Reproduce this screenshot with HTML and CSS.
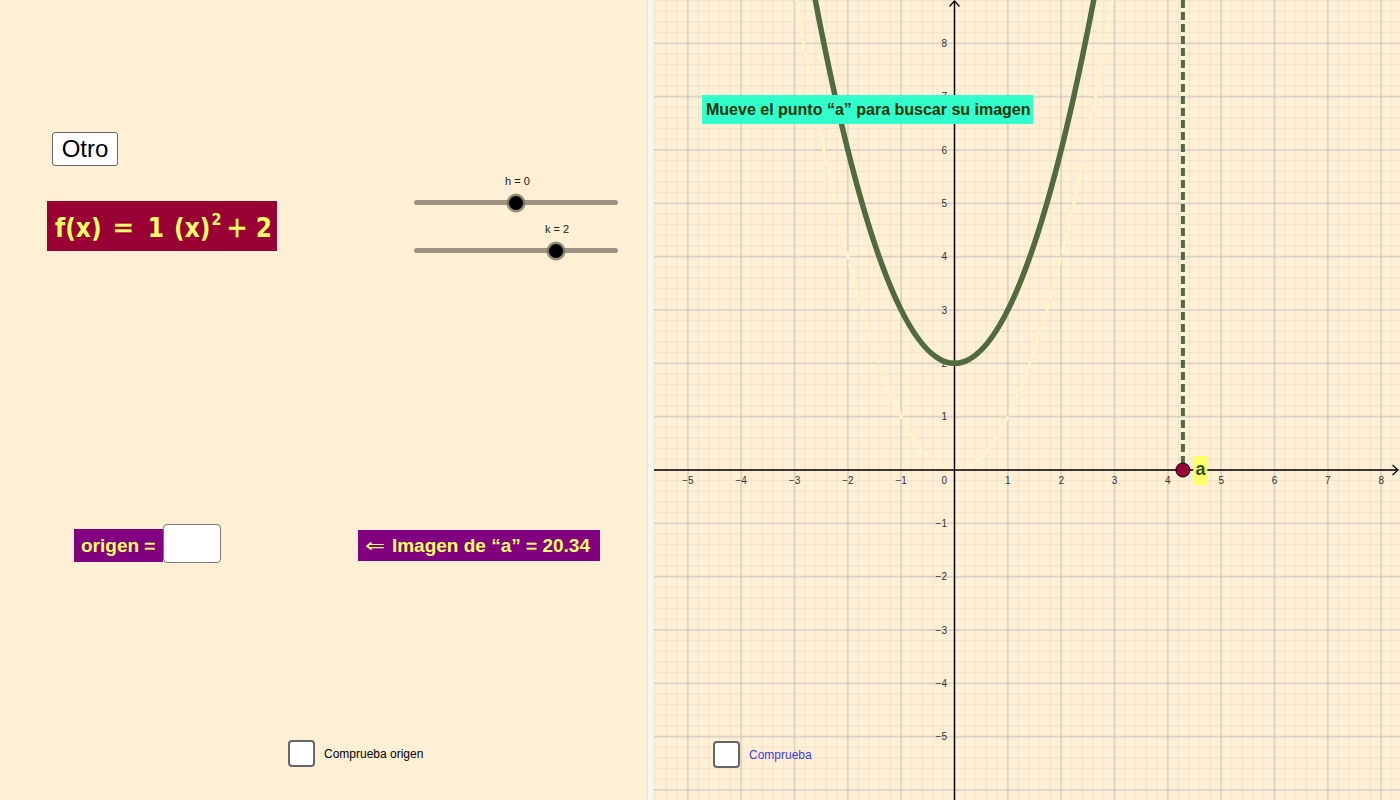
FILE: index.html
```html
<!DOCTYPE html>
<html lang="es">
<head>
<meta charset="utf-8">
<title>Función cuadrática</title>
<link rel="stylesheet" href="styles.css">
</head>
<body>
<div class="applet">
  <div class="view2">
    <button class="btn-otro">Otro</button>

    <div class="formula fbox">
      <span class="m-f">f(x)</span><span class="m-eq">=</span><span class="m-1">1</span><span class="m-par">(x)<sup>2</sup></span><span class="m-plus">+</span><span class="m-2">2</span>
    </div>

    <div class="slider slider-h">
      <span class="slider-label">h = 0</span>
      <div class="track"></div>
      <div class="knob"></div>
    </div>
    <div class="slider slider-k">
      <span class="slider-label">k = 2</span>
      <div class="track"></div>
      <div class="knob"></div>
    </div>

    <div class="origen-row">
      <div class="tex origen">origen <span class="t-eq">=</span></div>
      <div class="input-box"></div>
    </div>

    <div class="tex imagen"><span class="t-arrow">⇐</span>Imagen de “a” <span class="t-eq">=</span> 20.34</div>

    <label class="check check-origen"><span class="box"></span><span class="check-text">Comprueba origen</span></label>
  </div>

  <div class="divider"></div>

  <div class="view1">
    <svg class="graph" width="746" height="800" viewBox="0 0 746 800">
      <defs>
        <pattern id="gmin" patternUnits="userSpaceOnUse" x="295.167" y="464.667" width="10.6667" height="10.6667">
          <path d="M5.3333 0V10.6667M0 5.3333H10.6667" stroke="#f1e4ce" stroke-width="1" fill="none"/>
        </pattern>
        <pattern id="gmaj" patternUnits="userSpaceOnUse" x="273.833" y="443.333" width="53.3333" height="53.3333">
          <path d="M26.6667 0V53.3333M0 26.6667H53.3333" stroke="#c6c2bd" stroke-width="1" fill="none"/>
        </pattern>
      </defs>
      <rect width="746" height="800" fill="#ffefd5"/>
      <rect width="746" height="800" fill="url(#gmin)"/>
      <rect width="746" height="800" fill="url(#gmaj)"/>

      <!-- faint parabola y = x^2 -->
      <path d="M135.17 -42.53 Q300.5 982.53 465.83 -42.53" fill="none" stroke="#fff6c8" stroke-width="3" stroke-dasharray="8 4"/>

      <!-- axes -->
      <line x1="0" y1="470" x2="744" y2="470" stroke="#000" stroke-width="1.4"/>
      <path d="M738.5 465 L744 470 L738.5 475" fill="none" stroke="#000" stroke-width="1.2"/>
      <line x1="300.5" y1="1" x2="300.5" y2="800" stroke="#000" stroke-width="1.4"/>
      <path d="M295.5 6.5 L300.5 1 L305.5 6.5" fill="none" stroke="#000" stroke-width="1.2"/>

      <!-- tick labels -->
      <g class="lbl-x">
        <text x="33.83" y="484">−5</text>
        <text x="87.17" y="484">−4</text>
        <text x="140.5" y="484">−3</text>
        <text x="193.83" y="484">−2</text>
        <text x="247.17" y="484">−1</text>
        <text x="353.83" y="484">1</text>
        <text x="407.17" y="484">2</text>
        <text x="460.5" y="484">3</text>
        <text x="513.83" y="484">4</text>
        <text x="567.17" y="484">5</text>
        <text x="620.5" y="484">6</text>
        <text x="673.83" y="484">7</text>
        <text x="727.17" y="484">8</text>
      </g>
      <g class="lbl-y">
        <text x="293" y="484">0</text>
        <text x="293" y="420.2">1</text>
        <text x="293" y="366.8">2</text>
        <text x="293" y="313.5">3</text>
        <text x="293" y="260.2">4</text>
        <text x="293" y="206.8">5</text>
        <text x="293" y="153.5">6</text>
        <text x="293" y="100.2">7</text>
        <text x="293" y="46.8">8</text>
        <text x="293" y="526.8">−1</text>
        <text x="293" y="580.2">−2</text>
        <text x="293" y="633.5">−3</text>
        <text x="293" y="686.8">−4</text>
        <text x="293" y="740.2">−5</text>
      </g>

      <!-- f(x) = x^2 + 2 -->
      <path d="M153.83 -40 Q300.5 766.67 447.17 -40" fill="none" stroke="#4f6b3f" stroke-width="5.5"/>

      <!-- vertical dashed line at a -->
      <line x1="528.9" y1="0" x2="528.9" y2="463" stroke="#4f6b3f" stroke-width="4" stroke-dasharray="8 4"/>

      <!-- point a -->
      <circle cx="528.9" cy="470" r="7" fill="#99003a" stroke="#000" stroke-width="1"/>
      <rect x="539.3" y="456" width="14" height="29" fill="#ffff66"/>
      <text class="pt-label" x="541.5" y="475">a</text>
    </svg>

    <div class="hint">Mueve el punto “a” para buscar su imagen</div>

    <label class="check check-comp"><span class="box"></span><span class="check-text blue">Comprueba</span></label>
  </div>
</div>
</body>
</html>
```

FILE: styles.css
```css
* { box-sizing: border-box; }

html, body {
  margin: 0;
  padding: 0;
}

body {
  width: 1400px;
  height: 800px;
  overflow: hidden;
  background: #ffefd5;
  font-family: "Liberation Sans", Arial, sans-serif;
  color: #000;
}

.applet {
  display: flex;
  width: 1400px;
  height: 800px;
}

/* ---------- left graphics view (free canvas) ---------- */
.view2 {
  position: relative;
  flex: none;
  width: 647px;
  height: 800px;
  background: #ffefd5;
}

.divider {
  flex: none;
  width: 7px;
  height: 800px;
  background: #f6f6f6;
  border-left: 1px solid #e4e4e4;
  border-right: 1px solid #ececec;
}

.view1 {
  position: relative;
  flex: none;
  width: 746px;
  height: 800px;
  overflow: hidden;
  background: #ffefd5;
}

.graph { display: block; }

.btn-otro {
  position: absolute;
  left: 52px;
  top: 132px;
  width: 66px;
  height: 34px;
  padding: 0;
  background: #fff;
  border: 1px solid #666;
  border-radius: 3px;
  font-family: "Liberation Sans", Arial, sans-serif;
  font-size: 24px;
  line-height: 32px;
  color: #000;
}

/* f(x) formula */
.formula {
  font-family: "DejaVu Sans Condensed", "DejaVu Sans", sans-serif;
  font-stretch: condensed;
  font-weight: bold;
  color: #ffff66;
  white-space: nowrap;
}

.fbox {
  position: absolute;
  left: 47px;
  top: 201px;
  width: 230px;
  height: 50px;
  background: #990033;
  font-size: 26px;
  line-height: 50px;
  padding: 2px 0 0 8px;
}

.fbox span { display: inline-block; }
.fbox .m-eq { margin-left: 11px; font-weight: normal; font-size: 28px; -webkit-text-stroke: 0.5px #ffff66; }
.fbox .m-1 { margin-left: 14px; }
.fbox .m-par { margin-left: 10px; }
.fbox .m-par sup { font-size: 16px; line-height: 0; vertical-align: 12px; margin-left: 1px; }
.fbox .m-plus { margin-left: 5px; font-weight: normal; font-size: 28px; -webkit-text-stroke: 0.5px #ffff66; }
.fbox .m-2 { margin-left: 8px; }

/* sliders */
.slider {
  position: absolute;
  left: 414px;
  width: 204px;
  height: 5px;
}
.slider-h { top: 200px; }
.slider-k { top: 248px; }

.track {
  width: 100%;
  height: 5px;
  border-radius: 3px;
  background: #a09383;
}

.knob {
  position: absolute;
  top: -4.5px;
  width: 14px;
  height: 14px;
  border-radius: 50%;
  background: #000;
  box-shadow: 0 0 0 2.5px rgba(110, 110, 95, 0.75);
}
.slider-h .knob { left: 95px; }
.slider-k .knob { left: 135px; }

.slider-label {
  position: absolute;
  top: -25px;
  font-size: 11px;
  line-height: 13px;
  color: #222;
  white-space: nowrap;
}
.slider-h .slider-label { left: 91px; }
.slider-k .slider-label { left: 131px; }

/* purple LaTeX-like texts */
.tex {
  font-family: "Liberation Sans", Arial, sans-serif;
  font-weight: bold;
  color: #ffff66;
  background: #800080;
  font-size: 19px;
  white-space: nowrap;
}
.tex .t-eq {
  font-weight: normal;
  -webkit-text-stroke: 0.5px #ffff66;
}
.tex .t-arrow {
  display: inline-block;
  font-family: "DejaVu Sans", sans-serif;
  font-weight: normal;
  font-size: 19px;
  transform: scaleX(1.25);
  transform-origin: left center;
  margin-right: 11px;
}

.origen-row {
  position: absolute;
  left: 74px;
  top: 524px;
  display: flex;
  align-items: flex-end;
}

.origen {
  width: 89px;
  height: 33px;
  margin-bottom: 1px;
  line-height: 33px;
  padding-left: 7px;
}

.input-box {
  width: 58px;
  height: 39px;
  background: #fff;
  border: 1.5px solid #777;
  border-radius: 4px;
}

.imagen {
  position: absolute;
  left: 358px;
  top: 530px;
  width: 242px;
  height: 31px;
  line-height: 31px;
  padding-left: 7px;
}

/* checkboxes */
.check {
  position: absolute;
  display: flex;
  align-items: center;
  gap: 9px;
  font-size: 12px;
  color: #000;
}
.check-origen { left: 288px; top: 740px; }
.check-comp { left: 59px; top: 741px; }

.check .box {
  width: 27px;
  height: 27px;
  background: #fff;
  border: 2px solid #666;
  border-radius: 4px;
}
.check-text.blue { color: #3c3cdc; }

/* text box over the graph */
.hint {
  position: absolute;
  left: 48px;
  top: 95px;
  width: 331px;
  height: 29px;
  background: #33ffcc;
  color: #053305;
  font-weight: bold;
  font-size: 16px;
  line-height: 29px;
  padding-left: 4px;
  white-space: nowrap;
}

/* svg text */
.lbl-x text {
  font-family: "Liberation Sans", Arial, sans-serif;
  font-size: 10px;
  fill: #333;
  text-anchor: middle;
}
.lbl-y text {
  font-family: "Liberation Sans", Arial, sans-serif;
  font-size: 10px;
  fill: #333;
  text-anchor: end;
}
.pt-label {
  font-family: "Liberation Sans", Arial, sans-serif;
  font-weight: bold;
  font-size: 18px;
  fill: #2f4f1f;
}
```
